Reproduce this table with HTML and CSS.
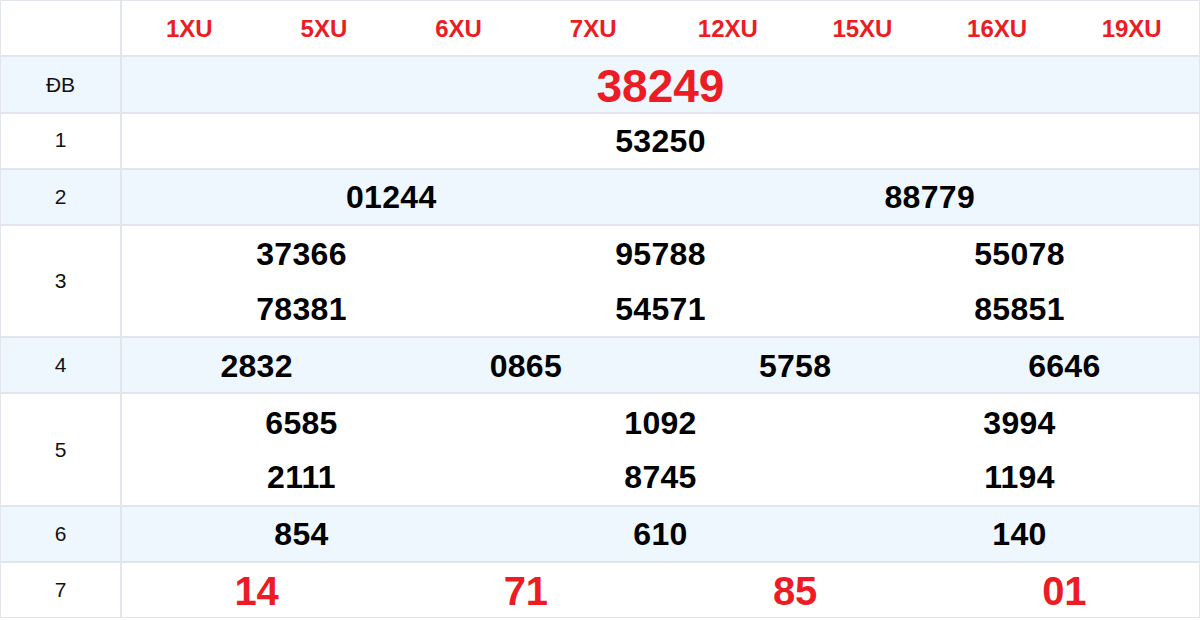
FILE: index.html
```html
<!DOCTYPE html>
<html>
<head>
<meta charset="utf-8">
<link rel="stylesheet" href="styles.css">
</head>
<body>
<div class="board">
  <div class="row">
    <div class="label"></div>
    <div class="cell cols-8 head">
      <span>1XU</span><span>5XU</span><span>6XU</span><span>7XU</span><span>12XU</span><span>15XU</span><span>16XU</span><span>19XU</span>
    </div>
  </div>
  <div class="row alt">
    <div class="label">ĐB</div>
    <div class="cell cols-1 special"><span>38249</span></div>
  </div>
  <div class="row">
    <div class="label">1</div>
    <div class="cell cols-1 num"><span>53250</span></div>
  </div>
  <div class="row alt">
    <div class="label">2</div>
    <div class="cell cols-2 num"><span>01244</span><span>88779</span></div>
  </div>
  <div class="row double">
    <div class="label">3</div>
    <div class="cell cols-3 num"><span>37366</span><span>95788</span><span>55078</span><span>78381</span><span>54571</span><span>85851</span></div>
  </div>
  <div class="row alt">
    <div class="label">4</div>
    <div class="cell cols-4 num"><span>2832</span><span>0865</span><span>5758</span><span>6646</span></div>
  </div>
  <div class="row double">
    <div class="label">5</div>
    <div class="cell cols-3 num"><span>6585</span><span>1092</span><span>3994</span><span>2111</span><span>8745</span><span>1194</span></div>
  </div>
  <div class="row alt">
    <div class="label">6</div>
    <div class="cell cols-3 num"><span>854</span><span>610</span><span>140</span></div>
  </div>
  <div class="row">
    <div class="label">7</div>
    <div class="cell cols-4 last"><span>14</span><span>71</span><span>85</span><span>01</span></div>
  </div>
</div>
</body>
</html>
```
FILE: styles.css
```css
html, body {
  margin: 0;
  padding: 0;
  background: #ffffff;
}
body {
  font-family: "Liberation Sans", Arial, sans-serif;
  color: #000;
}
.board {
  width: 1200px;
  display: flex;
  flex-direction: column;
}
.row {
  display: grid;
  grid-template-columns: 121px 1079px;
  height: 56.2px;
}
.row.double {
  height: 112.4px;
}
.row.alt {
  background: #eef6fe;
}
.label, .cell {
  box-sizing: border-box;
  border: 1px solid #e2e5eb;
}
.label {
  display: flex;
  align-items: center;
  justify-content: center;
  font-size: 21px;
  color: #111;
}
.cell {
  display: grid;
  align-items: center;
  justify-items: center;
  font-weight: bold;
  padding-top: 2px;
}
.cols-1 { grid-template-columns: 1fr; }
.cols-2 { grid-template-columns: repeat(2, 1fr); }
.cols-3 { grid-template-columns: repeat(3, 1fr); }
.cols-4 { grid-template-columns: repeat(4, 1fr); }
.cols-8 { grid-template-columns: repeat(8, 1fr); }
.head {
  color: #ed1c24;
  font-size: 24px;
}
.special {
  color: #ed1c24;
  font-size: 46px;
}
.num {
  font-size: 32px;
  letter-spacing: 0.3px;
}
.last {
  color: #ed1c24;
  font-size: 40px;
}
```
